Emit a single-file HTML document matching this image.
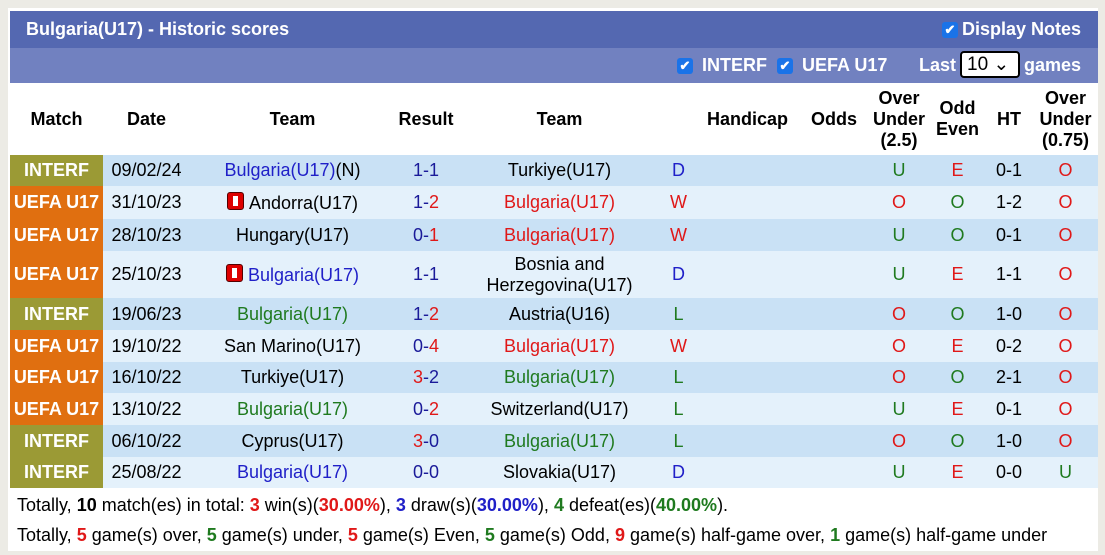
<!DOCTYPE html>
<html><head><meta charset="utf-8"><style>
body{margin:0;background:#ecebe5;font-family:"Liberation Sans",Arial,sans-serif;}
#w{position:absolute;left:8px;top:8px;width:1090px;height:543px;background:#fff;}
.t1{position:absolute;left:10px;top:11px;width:1088px;height:37px;background:#5468b1;color:#fff;font-weight:bold;font-size:18px;}
.t2{position:absolute;left:10px;top:48px;width:1088px;height:35px;background:#7181c0;color:#fff;font-weight:bold;font-size:18px;}
.cb{display:inline-block;width:16px;height:16px;background:#1a73e8;border-radius:3px;color:#fff;font-size:13px;line-height:16px;text-align:center;vertical-align:1px;margin-right:4px}
table{position:absolute;left:10px;top:83px;border-collapse:collapse;table-layout:fixed;width:1088px;font-size:18px;}
td{padding:0;text-align:center;white-space:nowrap;}
th{font-size:18px;font-weight:bold;color:#000;height:72px;line-height:21px;padding:0;}
.a td{background:#c9e1f5;}.b td{background:#e4f1fb;}
td.i{background:#9b9a35!important;color:#fff;font-weight:bold;}
td.u{background:#e06f10!important;color:#fff;font-weight:bold;}
.bl{color:#2020c8}.nv{color:#1a1a99}.r{color:#e01818}.g{color:#1f7a1f}
.fl{display:inline-block;width:15px;height:16px;background:#d00;border:1px solid #500;border-radius:3px;vertical-align:-1px;margin-right:5px;position:relative}
.fl:after{content:"";position:absolute;left:5px;top:3px;width:5px;height:10px;background:#fff}
.f{position:absolute;left:17px;font-size:18px;color:#000;}
.sel{position:absolute;left:950px;top:3px;width:60px;height:27px;border:2px solid #000;border-radius:4px;background:#fff;color:#000;font-weight:normal;font-size:19px;line-height:23px;padding-left:5px;box-sizing:border-box}
</style></head><body>
<div id="w"></div>
<div class="t1"><span style="position:absolute;left:16px;top:8px">Bulgaria(U17) - Historic scores</span><span style="position:absolute;right:17px;top:8px"><span class="cb">✔</span>Display Notes</span></div>
<div class="t2"><span style="position:absolute;left:667px;top:7px"><span class="cb">✔</span> INTERF &nbsp;<span class="cb">✔</span> UEFA U17</span><span style="position:absolute;left:909px;top:7px">Last</span><span class="sel">10 ⌄</span><span style="position:absolute;right:17px;top:7px">games</span></div>
<table>
<colgroup><col style="width:93px"><col style="width:87px"><col style="width:205px"><col style="width:62px"><col style="width:205px"><col style="width:33px"><col style="width:105px"><col style="width:68px"><col style="width:62px"><col style="width:55px"><col style="width:48px"><col style="width:65px"></colgroup>
<tr><th style="height:71px">Match</th><th>Date</th><th>Team</th><th>Result</th><th>Team</th><th></th><th>Handicap</th><th>Odds</th><th>Over<br>Under<br>(2.5)</th><th>Odd<br>Even</th><th>HT</th><th>Over<br>Under<br>(0.75)</th></tr>
<tr class="a" style="height:31px"><td class="i">INTERF</td><td>09/02/24</td><td><span class="bl">Bulgaria(U17)</span>(N)</td><td class="nv">1-1</td><td>Turkiye(U17)</td><td class="bl">D</td><td></td><td></td><td class="g">U</td><td class="r">E</td><td>0-1</td><td class="r">O</td></tr>
<tr class="b" style="height:33px"><td class="u">UEFA U17</td><td>31/10/23</td><td><span class="fl"></span>Andorra(U17)</td><td><span class="nv">1-</span><span class="r">2</span></td><td class="r">Bulgaria(U17)</td><td class="r">W</td><td></td><td></td><td class="r">O</td><td class="g">O</td><td>1-2</td><td class="r">O</td></tr>
<tr class="a" style="height:32px"><td class="u">UEFA U17</td><td>28/10/23</td><td>Hungary(U17)</td><td><span class="nv">0-</span><span class="r">1</span></td><td class="r">Bulgaria(U17)</td><td class="r">W</td><td></td><td></td><td class="g">U</td><td class="g">O</td><td>0-1</td><td class="r">O</td></tr>
<tr class="b" style="height:47px"><td class="u">UEFA U17</td><td>25/10/23</td><td><span class="fl"></span><span class="bl">Bulgaria(U17)</span></td><td class="nv">1-1</td><td style="white-space:normal;line-height:21px">Bosnia and<br>Herzegovina(U17)</td><td class="bl">D</td><td></td><td></td><td class="g">U</td><td class="r">E</td><td>1-1</td><td class="r">O</td></tr>
<tr class="a" style="height:32px"><td class="i">INTERF</td><td>19/06/23</td><td class="g">Bulgaria(U17)</td><td><span class="nv">1-</span><span class="r">2</span></td><td>Austria(U16)</td><td class="g">L</td><td></td><td></td><td class="r">O</td><td class="g">O</td><td>1-0</td><td class="r">O</td></tr>
<tr class="b" style="height:32px"><td class="u">UEFA U17</td><td>19/10/22</td><td>San Marino(U17)</td><td><span class="nv">0-</span><span class="r">4</span></td><td class="r">Bulgaria(U17)</td><td class="r">W</td><td></td><td></td><td class="r">O</td><td class="r">E</td><td>0-2</td><td class="r">O</td></tr>
<tr class="a" style="height:31px"><td class="u">UEFA U17</td><td>16/10/22</td><td>Turkiye(U17)</td><td><span class="r">3</span><span class="nv">-2</span></td><td class="g">Bulgaria(U17)</td><td class="g">L</td><td></td><td></td><td class="r">O</td><td class="g">O</td><td>2-1</td><td class="r">O</td></tr>
<tr class="b" style="height:32px"><td class="u">UEFA U17</td><td>13/10/22</td><td class="g">Bulgaria(U17)</td><td><span class="nv">0-</span><span class="r">2</span></td><td>Switzerland(U17)</td><td class="g">L</td><td></td><td></td><td class="g">U</td><td class="r">E</td><td>0-1</td><td class="r">O</td></tr>
<tr class="a" style="height:32px"><td class="i">INTERF</td><td>06/10/22</td><td>Cyprus(U17)</td><td><span class="r">3</span><span class="nv">-0</span></td><td class="g">Bulgaria(U17)</td><td class="g">L</td><td></td><td></td><td class="r">O</td><td class="g">O</td><td>1-0</td><td class="r">O</td></tr>
<tr class="b" style="height:31px"><td class="i">INTERF</td><td>25/08/22</td><td class="bl">Bulgaria(U17)</td><td class="nv">0-0</td><td>Slovakia(U17)</td><td class="bl">D</td><td></td><td></td><td class="g">U</td><td class="r">E</td><td>0-0</td><td class="g">U</td></tr>
</table>
<div class="f" style="top:495px">Totally, <b>10</b> match(es) in total: <b class="r">3</b> win(s)(<b class="r">30.00%</b>), <b class="bl">3</b> draw(s)(<b class="bl">30.00%</b>), <b class="g">4</b> defeat(es)(<b class="g">40.00%</b>).</div>
<div class="f" style="top:525px">Totally, <b class="r">5</b> game(s) over, <b class="g">5</b> game(s) under, <b class="r">5</b> game(s) Even, <b class="g">5</b> game(s) Odd, <b class="r">9</b> game(s) half-game over, <b class="g">1</b> game(s) half-game under</div>
</body></html>
